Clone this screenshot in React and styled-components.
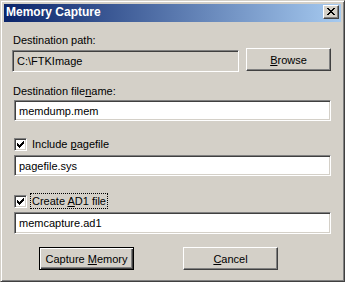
import React from 'react';
import styled, { createGlobalStyle } from 'styled-components';

const Global = createGlobalStyle`
  html, body { margin: 0; padding: 0; background: #d4d0c8; }
  body { font-family: "Liberation Sans", Arial, sans-serif; font-size: 11px; color: #000; }
  * { box-sizing: border-box; }
`;

const Window = styled.div`
  width: 345px;
  height: 282px;
  background: #d4d0c8;
  border: 1px solid;
  border-color: #d4d0c8 #404040 #404040 #d4d0c8;
  box-shadow: inset 1px 1px #fff, inset -1px -1px #808080;
  padding: 3px;
  display: flex;
  flex-direction: column;
`;

const TitleBar = styled.div`
  height: 18px;
  padding: 0 2px 2px 2px;
  display: flex;
  align-items: center;
  justify-content: space-between;
  background: linear-gradient(to right, #0a246a, #a6caf0);
`;

const TitleText = styled.span`
  color: #fff;
  font-weight: bold;
  font-size: 12px;
  line-height: 14px;
`;

const CloseButton = styled.button`
  width: 16px;
  height: 14px;
  padding: 0;
  margin: 0;
  background: #d4d0c8;
  border: 1px solid;
  border-color: #fff #404040 #404040 #fff;
  box-shadow: inset -1px -1px #808080;
  display: flex;
  align-items: flex-start;
  justify-content: flex-start;
  svg { display: block; margin: 2px 0 0 3px; }
`;

const Client = styled.div`
  flex: 1;
  padding: 12px 10px 0 10px;
  display: flex;
  flex-direction: column;
`;

const Label = styled.div`
  line-height: 13px;
  margin-top: ${p => p.$mt || 0}px;
  margin-left: -1px;
  white-space: nowrap;
`;

const PathRow = styled.div`
  display: flex;
  align-items: flex-start;
  margin-top: 1px;
  margin-left: -2px;
  gap: 7px;
`;

const Field = styled.input`
  display: block;
  width: ${p => p.$w || 317}px;
  height: ${p => p.$h || 21}px;
  margin: ${p => p.$mt || 0}px 0 0 0;
  padding: 0 4px;
  font-family: "Liberation Sans", Arial, sans-serif;
  font-size: 11px;
  color: #000;
  background: ${p => (p.$disabled ? '#d4d0c8' : '#fff')};
  border: 1px solid;
  border-color: #808080 #fff #fff #808080;
  box-shadow: inset 1px 1px #404040, inset -1px -1px #d4d0c8;
  outline: none;
`;

const Button = styled.button`
  width: ${p => p.$w || 95}px;
  height: 23px;
  padding: 0;
  margin: 0;
  font-family: "Liberation Sans", Arial, sans-serif;
  font-size: 11px;
  color: #000;
  background: #d4d0c8;
  border: 1px solid;
  border-color: ${p => (p.$default ? '#000' : '#fff #404040 #404040 #fff')};
  box-shadow: ${p =>
    p.$default
      ? 'inset 1px 1px #fff, inset -1px -1px #404040, inset -2px -2px #808080'
      : 'inset -1px -1px #808080'};
`;

const CheckRow = styled.div`
  display: flex;
  align-items: center;
  gap: 4px;
  margin-top: ${p => p.$mt || 0}px;
`;

const CheckBox = styled.span`
  width: 13px;
  height: 13px;
  background: #fff;
  border: 1px solid;
  border-color: #808080 #fff #fff #808080;
  box-shadow: inset 1px 1px #404040, inset -1px -1px #d4d0c8;
  display: flex;
  align-items: center;
  justify-content: center;
  svg { display: block; }
`;

const CheckLabel = styled.span`
  line-height: 13px;
  padding: 1px 1px 0 1px;
  outline: ${p => (p.$focus ? '1px dotted #000' : 'none')};
  outline-offset: 0;
  white-space: nowrap;
`;

const ButtonRow = styled.div`
  display: flex;
  gap: 49px;
  margin-top: 13px;
  margin-left: 25px;
`;

const Check = () => (
  <svg width="7" height="7" viewBox="0 0 7 7" shapeRendering="crispEdges">
    <path
      fill="#000"
      d="M6 0h1v3h-1zM5 1h1v3h-1zM4 2h1v3h-1zM0 2h1v3h-1zM1 3h1v3h-1zM2 4h1v3h-1zM3 3h1v3h-1z"
    />
  </svg>
);

const CloseX = () => (
  <svg width="8" height="7" viewBox="0 0 8 7" shapeRendering="crispEdges">
    <path
      fill="#000"
      d="M0 0h2v1h-2zM6 0h2v1h-2zM1 1h2v1h-2zM5 1h2v1h-2zM2 2h4v1h-4zM3 3h2v1h-2zM2 4h4v1h-4zM1 5h2v1h-2zM5 5h2v1h-2zM0 6h2v1h-2zM6 6h2v1h-2z"
    />
  </svg>
);

export default function App() {
  return (
    <>
      <Global />
      <Window>
        <TitleBar>
          <TitleText>Memory Capture</TitleText>
          <CloseButton aria-label="Close">
            <CloseX />
          </CloseButton>
        </TitleBar>
        <Client>
          <Label>Destination path:</Label>
          <PathRow>
            <Field $w={227} $h={22} $mt={2} $disabled readOnly defaultValue="C:\FTKImage" />
            <Button $w={85}>
              <u>B</u>rowse
            </Button>
          </PathRow>
          <Label $mt={13}>
            Destination file<u>n</u>ame:
          </Label>
          <Field $mt={2} readOnly defaultValue="memdump.mem" />
          <CheckRow $mt={16}>
            <CheckBox>
              <Check />
            </CheckBox>
            <CheckLabel>
              Include <u>p</u>agefile
            </CheckLabel>
          </CheckRow>
          <Field $mt={4} readOnly defaultValue="pagefile.sys" />
          <CheckRow $mt={18}>
            <CheckBox>
              <Check />
            </CheckBox>
            <CheckLabel $focus>
              Create <u>A</u>D1 file
            </CheckLabel>
          </CheckRow>
          <Field $mt={4} $h={22} readOnly defaultValue="memcapture.ad1" />
          <ButtonRow>
            <Button $default>
              Capture <u>M</u>emory
            </Button>
            <Button>
              <u>C</u>ancel
            </Button>
          </ButtonRow>
        </Client>
      </Window>
    </>
  );
}
